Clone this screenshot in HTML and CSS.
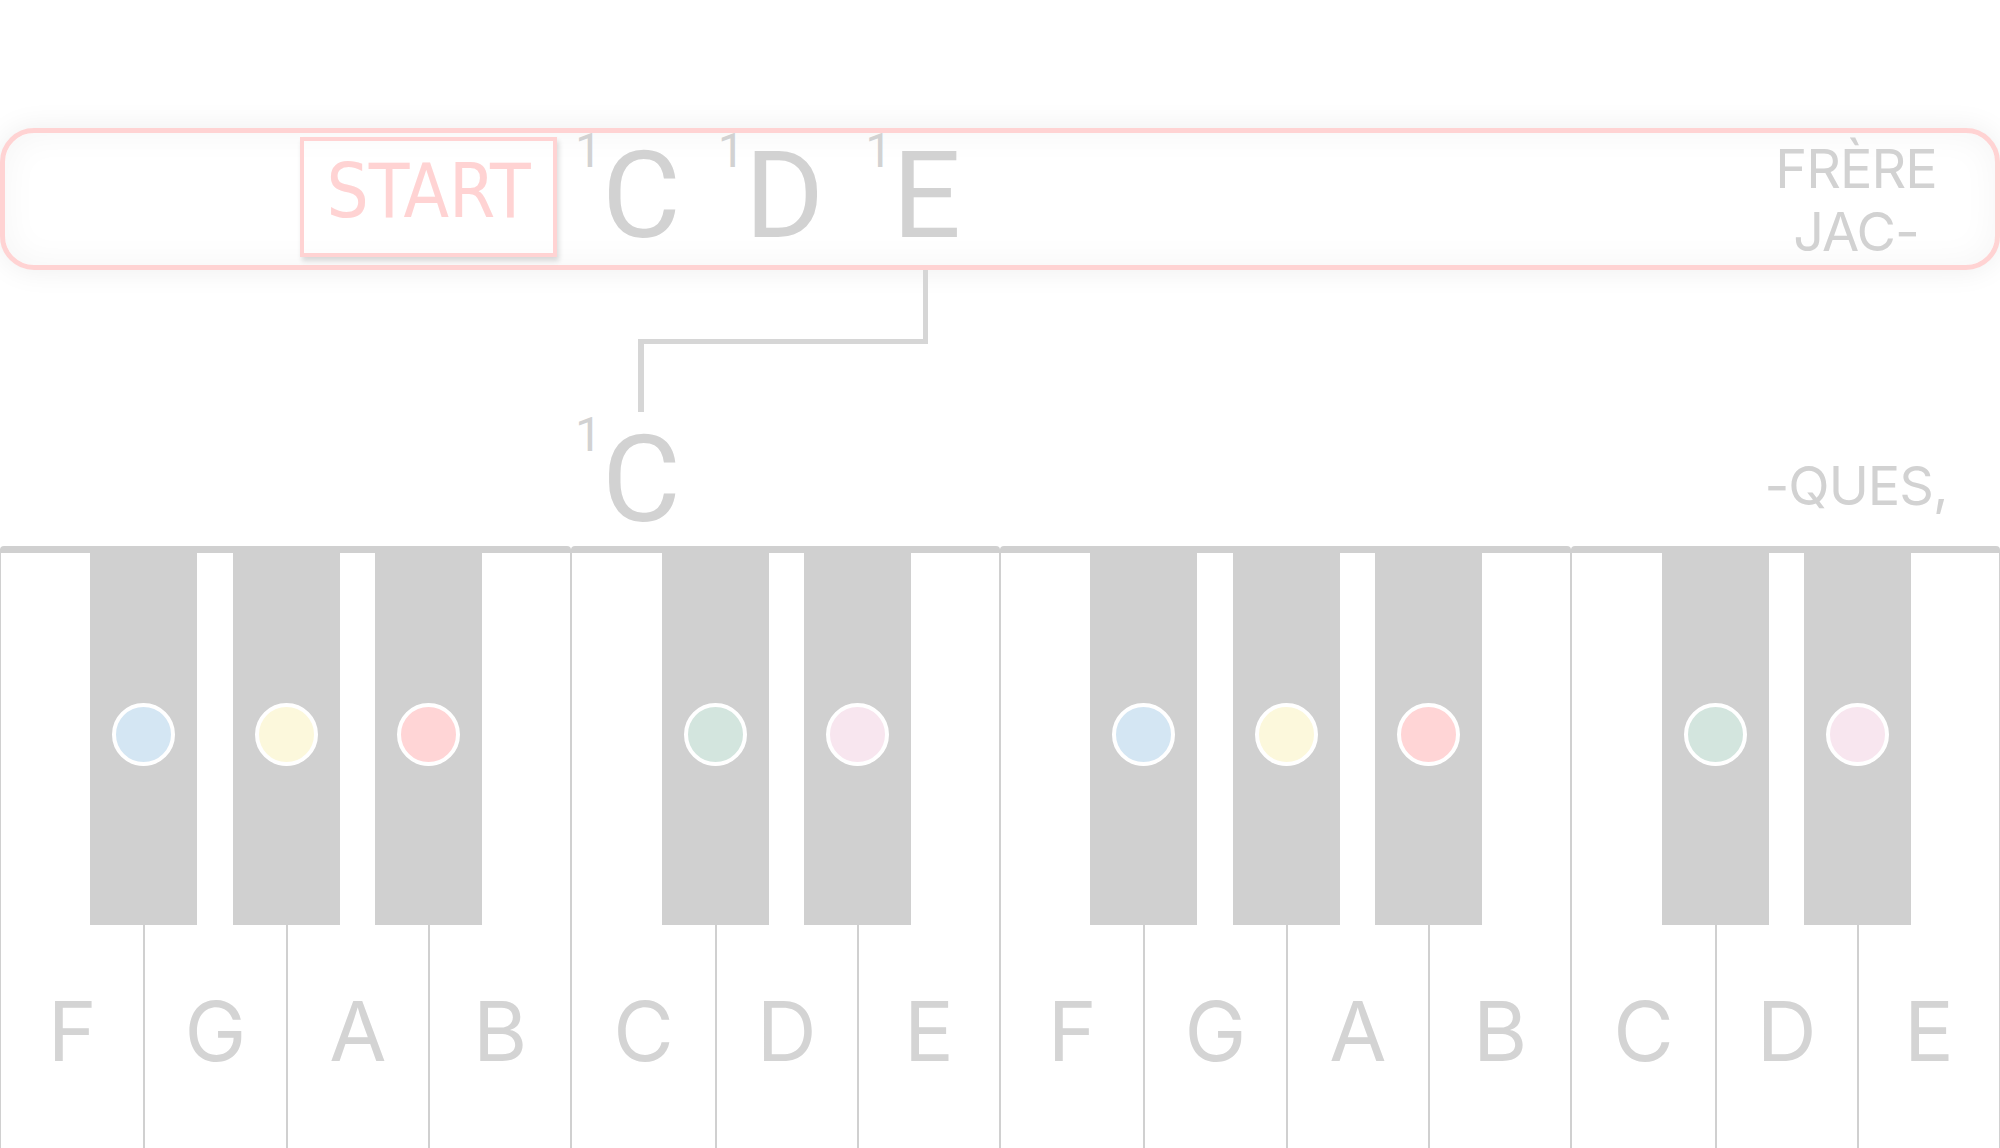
FILE: index.html
```html
<!DOCTYPE html>
<html lang="fr">
<head>
    <meta charset="UTF-8">
    <meta name="viewport" content="width=device-width, initial-scale=1.0">
    <title>Frère Jacques</title>
    <link rel="stylesheet" href="styles.css">
</head>
<body>

<div class="stage">

    <!-- current line: start button, notes and lyric -->
    <div class="bar">
        <div class="start">START</div>
        <div class="notes">
            <div class="note"><span class="oct">1</span><span class="name">C</span></div>
            <div class="note"><span class="oct">1</span><span class="name">D</span></div>
            <div class="note last"><span class="oct">1</span><span class="name">E</span></div>
        </div>
        <div class="lyric">FRÈRE<br>JAC-</div>
    </div>

    <!-- link from the last note to the next one -->
    <div class="link-top"></div>
    <div class="link-down"></div>

    <div class="next">
        <div class="note"><span class="oct">1</span><span class="name">C</span></div>
        <div class="lyric">-QUES,</div>
    </div>

    <div class="piano">
        <div class="octave fb">
            <div class="white">F<div class="black"><span class="dot blue"></span></div></div>
            <div class="white">G<div class="black"><span class="dot yellow"></span></div></div>
            <div class="white">A<div class="black"><span class="dot red"></span></div></div>
            <div class="white">B</div>
        </div>
        <div class="octave ce">
            <div class="white">C<div class="black"><span class="dot green"></span></div></div>
            <div class="white">D<div class="black"><span class="dot pink"></span></div></div>
            <div class="white">E</div>
        </div>
        <div class="octave fb">
            <div class="white">F<div class="black"><span class="dot blue"></span></div></div>
            <div class="white">G<div class="black"><span class="dot yellow"></span></div></div>
            <div class="white">A<div class="black"><span class="dot red"></span></div></div>
            <div class="white">B</div>
        </div>
        <div class="octave ce">
            <div class="white">C<div class="black"><span class="dot green"></span></div></div>
            <div class="white">D<div class="black"><span class="dot pink"></span></div></div>
            <div class="white">E</div>
        </div>
    </div>

</div>

</body>
</html>
```

FILE: styles.css
```css
* {
    box-sizing: border-box;
}
body {
    margin: 0;
    height: 1148px;
    overflow: hidden;
    background-color: #ffffff;
    font-family: Inter, "Noto Sans", sans-serif;
    color: #d2d2d2;
}
.stage {
    padding-top: 128px;
}
.bar {
    display: flex;
    height: 142px;
    border: 5px solid #ffd3d3;
    border-radius: 34px;
    background-color: #ffffff;
    box-shadow: 0 0 30px rgba(0, 0, 0, 0.07), inset 0 0 36px rgba(0, 0, 0, 0.045);
}
.start {
    align-self: flex-start;
    margin: 4px 0 0 295px;
    width: 257px;
    height: 120px;
    padding-top: 13px;
    border: 4px solid #ffd3d3;
    box-shadow: 2px 4px 5px rgba(0, 0, 0, 0.14);
    text-align: center;
    font-family: "DejaVu Sans Condensed", "DejaVu Sans", sans-serif;
    font-stretch: condensed;
    font-size: 74px;
    line-height: 74px;
    color: #ffd3d3;
}
.notes {
    align-self: flex-start;
    display: flex;
    gap: 37px;
    margin: 3px 0 0 18px;
}
.note {
    display: flex;
    align-items: flex-start;
    font-family: Roboto, sans-serif;
}
.notes .last {
    margin-left: 4px;
}
.oct {
    margin-top: -9px;
    font-size: 48px;
    line-height: 48px;
}
.name {
    font-size: 121px;
    line-height: 121px;
}
.lyric {
    align-self: flex-start;
    width: 220px;
    margin: 4px 29px 0 auto;
    text-align: center;
    letter-spacing: -1px;
    font-size: 54px;
    line-height: 63px;
}
.link-top {
    margin-left: 638px;
    width: 290px;
    height: 74px;
    border-right: 5px solid #d6d6d6;
    border-bottom: 5px solid #d6d6d6;
}
.link-down {
    margin-left: 638px;
    width: 6px;
    height: 68px;
    background-color: #d6d6d6;
}
.next {
    display: flex;
    align-items: flex-start;
    height: 121px;
    margin-top: 8px;
}
.next .note {
    margin-left: 575px;
}
.next .lyric {
    margin: 34px 34px 0 auto;
}
.piano {
    display: grid;
    grid-template-columns: 4fr 3fr 4fr 3fr;
    height: 700px;
    margin-top: 5px;
}
.octave {
    display: grid;
    border: 1px solid #d0d0d0;
    border-top-width: 7px;
    border-bottom: none;
    border-radius: 4px 4px 0 0;
}
.fb {
    grid-template-columns: repeat(4, 1fr);
}
.ce {
    grid-template-columns: repeat(3, 1fr);
}
.white {
    position: relative;
    padding-top: 437px;
    text-align: center;
    font-size: 83px;
    line-height: 83px;
    color: #d4d4d4;
}
.white + .white {
    border-left: 2px solid #d0d0d0;
}
.black {
    position: absolute;
    top: 0;
    right: -54px;
    z-index: 1;
    display: flex;
    justify-content: center;
    width: 107px;
    height: 372px;
    padding-top: 150px;
    background-color: #d0d0d0;
}
.dot {
    width: 63px;
    height: 63px;
    border: 4px solid #ffffff;
    border-radius: 50%;
}
.blue { background-color: #d4e6f3; }
.yellow { background-color: #fcf8dc; }
.red { background-color: #ffd5d6; }
.green { background-color: #d3e5de; }
.pink { background-color: #f8e6ef; }
```
